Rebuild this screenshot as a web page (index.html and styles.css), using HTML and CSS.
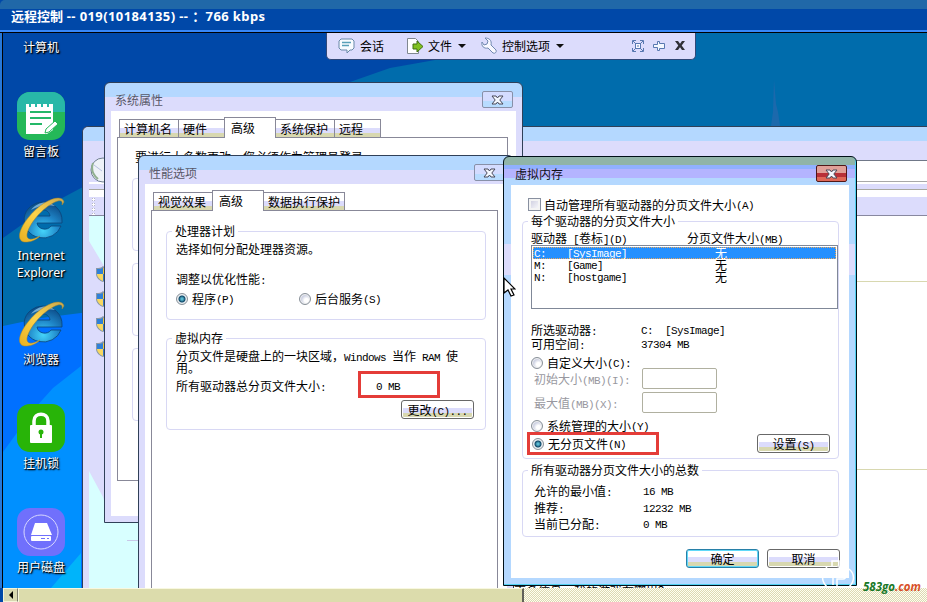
FILE: index.html
```html
<!DOCTYPE html>
<html lang="zh-CN">
<head>
    <meta charset="UTF-8">
    <title>远程控制</title>
    <link rel="stylesheet" href="styles.css">
</head>
<body>
    <svg class="defs" width="0" height="0">
        <defs>
            <radialGradient id="ball" cx="50%" cy="80%" r="80%">
                <stop offset="0" stop-color="#45d4fa"/>
                <stop offset="0.5" stop-color="#1f86c8"/>
                <stop offset="1" stop-color="#0b4a86"/>
            </radialGradient>
            <linearGradient id="ring" x1="0" y1="1" x2="1" y2="0">
                <stop offset="0" stop-color="#e8b020"/>
                <stop offset="0.5" stop-color="#ffd34a"/>
                <stop offset="1" stop-color="#c8a850"/>
            </linearGradient>
            <symbol id="ie" viewBox="0 0 48 48">
                <path d="M26 6a19 18 0 0 1 19 19v2H20c1 7 11 8 14 3h10A19 18 0 1 1 26 6zM20 20h13c-1-8-12-8-13 0z" fill="url(#ball)" fill-rule="evenodd" stroke="#0a4478" stroke-width=".8"/>
                <path d="M14 14c6-8 17-10 24-4-8-2-17 0-24 4z" fill="#9fcfe8" opacity=".7"/>
                <path d="M47 6C45-3 25 4 11 22-1 37-1 50 15 45c3-1 6-3 8-5-7 4-14 5-13-2 2-10 15-26 28-32 5-2 8-2 7 3z" fill="url(#ring)" stroke="#a8842a" stroke-width=".5"/>
            </symbol>
            <symbol id="x" viewBox="0 0 13 10">
                <path d="M1 1h4l1.500 2L8 1h4L8.800 5 12 9H8L6.500 7 5 9H1l3.200-4z"/>
            </symbol>
            <symbol id="shield" viewBox="0 0 14 16">
                <path d="M7 0c2 2 4 2 7 2v6c0 4-4 7-7 8-3-1-7-4-7-8V2c3 0 5 0 7-2z" fill="#8898a8"/>
                <path d="M7 2v6H1V3c3 0 4 0 6-1z" fill="#3080d8"/>
                <path d="M7 2v6h6V3c-3 0-4 0-6-1z" fill="#f0c840"/>
                <path d="M1 8h6v7c-3-1-6-4-6-7z" fill="#f8d860"/>
                <path d="M13 8H7v7c3-1 6-4 6-7z" fill="#3878c8"/>
            </symbol>
        </defs>
    </svg>

    <div class="screen">
        <header class="caption">远程控制<span> -- 019(10184135) -- ：766 kbps</span></header>

        <main class="desktop">
            <svg class="wallpaper" width="924" height="555" viewBox="3 33 924 555">
                <rect x="3" y="33" width="924" height="555" fill="#0048a8"/>
                <path d="M452 33l-17 27-45 8-40 14-110 38L81 188l-30 16-48 34v350h924V33z" fill="#006cac"/>
                <path d="M81 313l-40 5-38 8v262h200V313z" fill="#0070ff"/>
                <path d="M81 366l-28 22-18 20-32 44v136h78z" fill="#0090ff"/>
                <path d="M81 553l-12 14-18 21h30z" fill="#00b4fa"/>
                <path d="M771 126l2-14 1-32 2 24 2 8 2 14z" fill="#2868ac" opacity=".7"/>
            </svg>

            <ul class="shortcuts">
                <li><i></i><b>计算机</b></li>
                <li>
                    <svg width="48" height="48" viewBox="0 0 48 48">
                        <rect width="48" height="48" rx="13" fill="#24b858"/>
                        <path d="M0 20v-7A13 13 0 0 1 13 0h22a13 13 0 0 1 13 13v7z" fill="#28b8a8"/>
                        <path d="M9 12h3v3h2v-3h4v3h2v-3h4v3h2v-3h4v3h2v-3h4v26l-6 4H9z" fill="#fff"/>
                        <path d="M13 20h21M13 26h21M13 32h12" stroke="#24b868" stroke-width="2"/>
                        <path d="M28 41l1-4 9-8 3 3-9 8z" fill="#fff" stroke="#24b858" stroke-width="1"/>
                    </svg>
                    <b>留言板</b>
                </li>
                <li><svg width="48" height="48"><use href="#ie"/></svg><b class="latin">Internet<br>Explorer</b></li>
                <li><svg width="48" height="48"><use href="#ie"/></svg><b>浏览器</b></li>
                <li>
                    <svg width="48" height="48" viewBox="0 0 48 48">
                        <rect width="48" height="48" rx="13" fill="#28b408"/>
                        <path d="M17 24v-7c0-9 14-9 14 0v7" fill="none" stroke="#fff" stroke-width="3.500"/>
                        <rect x="13" y="21" width="22" height="18" rx="1" fill="#fff"/>
                        <circle cx="24" cy="28" r="2.500" fill="#28b408"/>
                        <path d="M23 28h2v6h-2z" fill="#28b408"/>
                    </svg>
                    <b>挂机锁</b>
                </li>
                <li>
                    <svg width="48" height="48" viewBox="0 0 48 48">
                        <rect width="48" height="48" rx="13" fill="#7070fc"/>
                        <circle cx="24" cy="24" r="17" fill="none" stroke="#d8d8ff"/>
                        <path d="M18 15h12l5 12H14z" fill="#fff"/>
                        <rect x="14" y="28" width="20" height="5" rx="1" fill="#fff"/>
                        <path d="M24 30.500h4M30 30.500h2" stroke="#7070fc"/>
                    </svg>
                    <b>用户磁盘</b>
                </li>
            </ul>

            <section class="window explorer">
                <div class="strip"></div>
                <div class="address"></div>
                <div class="menubar"></div>
                <div class="toolbar"></div>
                <div class="pages">
                    <div class="sidebar">
                        <svg class="wedge" width="50" height="373" viewBox="89 215 50 373">
                            <path d="M89 215h15v50L89 240zM89 470l14 26 8 26h28v66H89z" fill="#d8ffff"/>
                            <path d="M127 539.500h12" stroke="#c8c8e8"/>
                        </svg>
                        <svg class="nav" width="26" height="26"><circle cx="13" cy="13" r="12" fill="#eef2f8" stroke="#708090"/><path d="M3 6c-2 6 0 12 5 16" stroke="#90b090" stroke-width="2" fill="none"/><path d="M4 8l8 6" stroke="#b8c0e0"/></svg>
                        <svg class="shields" width="14" height="94">
                            <use href="#shield" width="14" height="16"/>
                            <use href="#shield" y="25" width="14" height="16"/>
                            <use href="#shield" y="50" width="14" height="16"/>
                            <use href="#shield" y="75" width="14" height="16"/>
                        </svg>
                    </div>
                    <div class="page"><p class="cut">更多信息：我的游戏在哪里？</p></div>
                </div>
            </section>

            <section class="window sysprops">
                <header><h2>系统属性</h2><button class="close"><svg width="13" height="10"><use href="#x"/></svg></button></header>
                <div class="content">
                    <nav class="tabs"><a class="w4">计算机名</a><a class="w2">硬件</a><a class="active">高级</a><a class="w4">系统保护</a><a class="w2">远程</a></nav>
                    <div class="pane">
                        <p>要进行大多数更改，您必须作为管理员登录。</p>
                        <div class="box"></div><div class="box"></div><div class="box"></div>
                    </div>
                </div>
            </section>

            <section class="window perf">
                <header><h2>性能选项</h2><button class="close"><svg width="13" height="10"><use href="#x"/></svg></button></header>
                <div class="content">
                    <nav class="tabs"><a class="w4">视觉效果</a><a class="active">高级</a><a class="w6">数据执行保护</a></nav>
                    <div class="pane">
                        <fieldset class="cpu">
                            <legend>处理器计划</legend>
                            <p>选择如何分配处理器资源。</p>
                            <p class="adjust">调整以优化性能<s>:</s></p>
                            <div class="row choices">
                                <label><i class="radio on"></i>程序<s>(P)</s></label>
                                <label><i class="radio"></i>后台服务<s>(S)</s></label>
                            </div>
                        </fieldset>
                        <fieldset class="vmem">
                            <legend>虚拟内存</legend>
                            <p>分页文件是硬盘上的一块区域，<s>Windows </s>当作<s> RAM </s>使<br>用。</p>
                            <div class="row total">
                                <span>所有驱动器总分页文件大小<s>:</s></span>
                                <span class="mark"><s>0 MB</s></span>
                            </div>
                            <button class="btn">更改<s>(C)...</s></button>
                        </fieldset>
                    </div>
                </div>
            </section>

            <section class="window memory">
                <header><h2>虚拟内存</h2><button class="close"><svg width="13" height="10"><use href="#x"/></svg></button></header>
                <div class="content">
                    <label class="row auto"><i class="check"></i>自动管理所有驱动器的分页文件大小<s>(A)</s></label>
                    <fieldset class="drives">
                        <legend>每个驱动器的分页文件大小</legend>
                        <div class="row heads"><span>驱动器<s> [</s>卷标<s>](D)</s></span><span>分页文件大小<s>(MB)</s></span></div>
                        <ul class="list">
                            <li class="selected"><s>C:</s><s>[SysImage]</s><span>无</span></li>
                            <li><s>M:</s><s>[Game]</s><span>无</span></li>
                            <li><s>N:</s><s>[hostgame]</s><span>无</span></li>
                        </ul>
                        <div class="row pair first"><span>所选驱动器<s>:</s></span><s>C:  [SysImage]</s></div>
                        <div class="row pair second"><span>可用空间<s>:</s></span><s>37304 MB</s></div>
                        <label class="row custom"><i class="radio"></i>自定义大小<s>(C):</s></label>
                        <div class="row size initial"><span>初始大小<s>(MB)(I):</s></span><input type="text" disabled></div>
                        <div class="row size"><span>最大值<s>(MB)(X):</s></span><input type="text" disabled></div>
                        <label class="row managed"><i class="radio"></i>系统管理的大小<s>(Y)</s></label>
                        <div class="row last">
                            <label class="mark"><i class="radio on"></i>无分页文件<s>(N)</s></label>
                            <button class="btn">设置<s>(S)</s></button>
                        </div>
                    </fieldset>
                    <fieldset class="totals">
                        <legend>所有驱动器分页文件大小的总数</legend>
                        <div class="row pair"><span>允许的最小值<s>:</s></span><s>16 MB</s></div>
                        <div class="row pair"><span>推荐<s>:</s></span><s>12232 MB</s></div>
                        <div class="row pair"><span>当前已分配<s>:</s></span><s>0 MB</s></div>
                    </fieldset>
                    <div class="actions"><button class="btn default">确定</button><button class="btn">取消</button></div>
                </div>
            </section>

            <div class="remote-bar">
                <span class="item talk">
                    <svg width="18" height="18" viewBox="0 0 18 18"><path d="M3 2h11l2 2v7l-2 2h-2l-3 3v-3H3l-2-2V4z" fill="#f8fcff" stroke="#6888a8"/><path d="M4 5.500h9M4 8.500h7" stroke="#58a0b8" stroke-width="1.300"/></svg>会话
                </span>
                <span class="item file">
                    <svg width="18" height="18" viewBox="0 0 18 18"><path d="M1.500 1.500h8l3 3v12h-11z" fill="#fff" stroke="#808890"/><path d="M7 7h4V4l6 5.500-6 5.500v-3H7z" fill="#80c020" stroke="#407010"/></svg>文件<i></i>
                </span>
                <span class="item options">
                    <svg width="17" height="17" viewBox="0 0 17 17"><path d="M4 1l3 3-1 3-3 1-2-3c-1 4 2 7 6 6l5 5c2 1 4-1 3-3l-5-5c1-5-2-7-6-7z" fill="#f8f8ff" stroke="#7088b0"/></svg>控制选项<i></i>
                </span>
                <span class="tools">
                    <svg width="12" height="12" viewBox="0 0 12 12" fill="none" stroke="#5878b0"><path d="M.5 4V.5H4M8 .5h3.500V4M11.500 8v3.500H8M4 11.500H.5V8M1 1l2.500 2.500M11 1L8.500 3.500M11 11L8.500 8.500M1 11l2.500-2.500"/><rect x="3.500" y="3.500" width="5" height="5" fill="#f8f8ff"/><path d="M5 6h2"/></svg>
                    <svg width="13" height="12" viewBox="0 0 13 12"><path d="M.5 4.500h4v-3h2v2h5v5h-5v2h-2v-3h-4z" fill="#f4f8ff" stroke="#5878b0"/></svg>
                    <svg width="10" height="9" viewBox="0 0 10 10" preserveAspectRatio="none"><path d="M0 0h3l2 3 2-3h3L6.700 5 10 10H7L5 7l-2 3H0l3.300-5z" fill="#303038"/></svg>
                </span>
            </div>

            <svg class="cursor" width="13" height="21" viewBox="0 0 13 21"><path d="M1 1v15l4-3 3 6 3-1-3-6h4z" fill="#fff" stroke="#000" stroke-width="1.200"/></svg>
        </main>

        <footer class="scrollbar"><span class="arrow"></span><span class="thumb"></span><span class="track"></span></footer>

        <svg class="logo" width="36" height="34" viewBox="0 0 36 34" fill="none" stroke="#fff" stroke-width="1.500"><path d="M6 8c-6 6-6 14 0 20M28 10c6 5 6 12 0 18M12 12v14M12 28h10M11 8V2h7v6M14 12h8c4 0 4 8 0 8h-6v7"/></svg>
        <div class="site">583go<em>.com</em></div>
    </div>
</body>
</html>
```
FILE: styles.css
```css
* {
    box-sizing: border-box;
}

body {
    margin: 0;
    font-family: "Noto Sans CJK SC", sans-serif;
    font-size: 12px;
    line-height: 12px;
    color: #000;
}

p, h2, ul, fieldset {
    margin: 0;
    padding: 0;
}

ul {
    list-style: none;
}

/* half-width text */
s {
    font-family: "Liberation Mono", monospace;
    font-size: 11px;
    letter-spacing: -0.6px;
    line-height: 0;
    text-decoration: none;
    white-space: pre;
}

.defs {
    position: absolute;
}

.screen {
    position: relative;
    display: flex;
    flex-direction: column;
    width: 927px;
    height: 602px;
    overflow: hidden;
    background: #0048a8;
}

.caption {
    height: 33px;
    padding: 1px 0 0 11px;
    font-size: 13px;
    font-weight: bold;
    line-height: 30px;
    color: #fff;
    white-space: pre;
    border-radius: 5px 0 0 0;
    background: linear-gradient(#2068a8 0 9px, #0048a8 9px 30px, #3888f8 30px 32px, #000 32px);
}

.caption span {
    font-family: "Noto Sans", "Noto Sans CJK SC", sans-serif;
    letter-spacing: 0.4px;
}

.desktop {
    position: relative;
    height: 555px;
    margin-left: 3px;
    overflow: hidden;
    box-shadow: -1px 0 #000, -3px 0 #2878d8;
}

.wallpaper {
    position: absolute;
    left: 0;
    top: 0;
}

.shortcuts {
    position: relative;
    width: 76px;
    margin-top: -45px;
}

.shortcuts li {
    display: flex;
    flex-direction: column;
    align-items: center;
    height: 104px;
}

.shortcuts i {
    height: 48px;
}

.shortcuts b {
    margin-top: 5px;
    font-weight: normal;
    color: #fff;
    text-align: center;
    white-space: nowrap;
    text-shadow: 1px 1px 1px #000, 1px 1px 2px #000;
}

.shortcuts .latin {
    margin-top: 3px;
    font-family: "Noto Sans", sans-serif;
    font-size: 12.3px;
    line-height: 17px;
}

/* windows */
.window {
    position: absolute;
    border: 1px solid #304058;
    border-radius: 6px 6px 0 0;
    background: linear-gradient(#b4d8ff 14px, #dcdcfc 14px);
}

.window header {
    display: flex;
    justify-content: space-between;
    height: 28px;
}

.window h2 {
    padding: 11px 0 0 10px;
    font-size: 12px;
    font-weight: normal;
    color: #585868;
}

.close {
    display: flex;
    align-items: center;
    justify-content: center;
    width: 31px;
    height: 17px;
    margin: 8px 9px 0 0;
    padding: 0;
    border: 1px solid #8890a8;
    border-radius: 2px;
    background: linear-gradient(#d4dcff 60%, #b8dcff 60%);
}

.close svg {
    fill: #f4f8ff;
    stroke: #484858;
}

.content {
    margin: 0 6px;
    background: #fff;
}

.tabs {
    display: flex;
    align-items: flex-end;
    height: 21px;
    padding-left: 2px;
}

.tabs a {
    height: 18px;
    padding: 3px 0 0 5px;
    border: 1px solid #888898;
    border-bottom: 0;
    margin-right: -1px;
    background: linear-gradient(#fff 8px, #dcdcfc 8px 13px, #d8d8b0 13px);
    white-space: nowrap;
}

.tabs .w2 {
    width: 47px;
    padding-left: 4px;
}

.tabs .w4 {
    width: 60px;
    padding-left: 4px;
}

.tabs .w6 {
    width: 82px;
    padding-left: 4px;
}

.tabs .active {
    position: relative;
    z-index: 1;
    height: 21px;
    width: 52px;
    margin-bottom: -1px;
    padding: 4px 0 0 6px;
    background: #fff;
}

.pane {
    border: 1px solid #888898;
}

fieldset {
    min-width: 0;
    border: 1px solid #d8d8f4;
    border-radius: 4px;
}

legend {
    height: 12px;
    margin-left: 5px;
    padding: 0 3px;
}

.row, .row label {
    display: flex;
    align-items: center;
    white-space: nowrap;
}

.row > s, label > s {
    padding-top: 2px;
}

.radio {
    flex: none;
    width: 12px;
    height: 12px;
    margin-right: 4px;
    border: 1px solid #889098;
    border-radius: 50%;
    background: radial-gradient(circle at 65% 65%, #fff 2px, #d0d4e4 5px);
    box-shadow: inset 0 0 0 1px #f0f0f0;
}

.radio.on {
    background: radial-gradient(circle, #58b8d0 0 1px, #104868 3px, #d8e4ec 4px);
}

.check {
    width: 13px;
    height: 13px;
    margin-right: 3px;
    border: 1px solid #8890a0;
    background: linear-gradient(135deg, #c8c8dc, #fff);
    box-shadow: inset 0 0 0 2px #f4f4f4;
}

.btn {
    width: 73px;
    height: 19px;
    padding: 0;
    border: 1px solid #686868;
    border-radius: 3px;
    font: 12px/12px "Noto Sans CJK SC", sans-serif;
    color: #000;
    background: linear-gradient(#fff 7px, #dcdcfc 7px 12px, #d8d8b0 12px);
    box-shadow: inset 0 0 0 1px #fff;
}

.btn.default {
    border-color: #2880a8;
    box-shadow: inset 0 0 0 1px #60d8f8;
}

.mark {
    border: 3px solid #e43c38;
}

/* explorer behind the dialogs */
.explorer {
    left: 79px;
    top: 93px;
    width: 860px;
    height: 480px;
    background: #dcdcfc;
}

.explorer .strip {
    height: 33px;
    border-radius: 6px 6px 0 0;
    background: linear-gradient(#b4d8ff 14px, #dcdcfc 14px);
}

.explorer .address {
    height: 22px;
    margin-left: 440px;
    border: 1px solid #707888;
    border-bottom-color: #a8a8a8;
    background: #fff;
}

.explorer .menubar {
    height: 15px;
    margin-left: 6px;
    background: linear-gradient(#fff 2px, #dcdcfc 2px 7px, #a8a8a0 7px 8px, #fff 8px);
}

.explorer .toolbar {
    height: 19px;
    margin-left: 6px;
    border-bottom: 1px solid #8888a0;
    background: radial-gradient(circle, #fff 1.2px, #b8b8c8 1.3px 1.8px, transparent 2px) 2px 0 / 5px 5px repeat-y, #dcdcfc;
}

.pages {
    display: flex;
    height: 373px;
    margin-left: 6px;
}

.sidebar {
    position: relative;
    width: 300px;
}

.nav {
    position: absolute;
    left: 1px;
    top: -59px;
}

.shields {
    position: absolute;
    left: 7px;
    top: 50px;
}

.page {
    display: flex;
    flex: 1;
    align-items: flex-end;
    background: linear-gradient(#fff 65px, #d8d8b0 65px 66px, #fff 66px 253px, #d8d8b0 253px 254px, #fff 254px);
}

.cut {
    height: 4px;
    margin-left: 125px;
    overflow: hidden;
}

.sysprops {
    left: 101px;
    top: 49px;
    width: 419px;
    height: 441px;
}

.sysprops .content {
    height: 405px;
    padding: 5px 8px 0 6px;
}

.sysprops .pane {
    height: 344px;
    padding: 13px 14px;
}

.sysprops .pane p {
    margin: 0 0 15px 3px;
}

.sysprops .box {
    height: 73px;
    margin-bottom: 12px;
    border: 1px solid #d8d8f4;
    border-radius: 4px;
}

.perf {
    left: 135px;
    top: 122px;
    width: 376px;
    height: 450px;
}

.perf .close {
    margin-right: 8px;
}

.perf .content {
    height: 415px;
    padding: 5px 9px 0 6px;
}

.perf .pane {
    height: 400px;
    padding: 14px 11px 0 14px;
}

.perf fieldset {
    height: 95px;
    padding-left: 9px;
}

.perf legend {
    margin-left: -4px;
}

.perf p {
    margin-top: 6px;
    white-space: nowrap;
}

.perf .adjust {
    margin-top: 18px;
}

.choices {
    margin-top: 8px;
    height: 12px;
}

.choices label {
    width: 123px;
}

.perf .vmem {
    height: 98px;
    margin-top: 12px;
}

.total {
    height: 27px;
    margin-top: -3px;
}

.total > span:first-child {
    width: 182px;
    padding-top: 3px;
}

.total .mark {
    width: 82px;
    height: 27px;
    padding: 5px 0 0 15px;
}

.vmem .btn {
    display: block;
    margin: 2px 0 0 225px;
}

.memory {
    left: 500px;
    top: 123px;
    width: 354px;
    height: 430px;
    border-color: #001018;
    box-shadow: inset -1px -1px #50d0f0;
    background: linear-gradient(#90b4a8 8px, #90b0ff 8px 12px, #b4b4ff 12px 21px, #b4d8ff 21px 87px, #dcdcfc 87px 118px, #b4d8ff 118px);
}

.memory h2 {
    padding-left: 11px;
    color: #101018;
}

.memory .close {
    margin-right: 9px;
    border-color: #501818;
    background: linear-gradient(#e0a098 7px, #b83038 7px 11px, #e06858 11px);
}

.memory .content {
    height: 393px;
    margin: 0 7px;
    padding: 13px 10px 0 11px;
}

.auto {
    height: 13px;
    margin-left: 6px;
}

.drives {
    height: 244px;
    margin-top: 4px;
    padding: 3px 0 0 8px;
}

.drives legend {
    margin-left: -3px;
}

.heads {
    height: 15px;
}

.heads span:first-child {
    width: 156px;
}

.list {
    height: 64px;
    padding: 1px;
    border: 1px solid #808898;
}

.list li {
    display: flex;
    align-items: center;
    height: 12px;
    padding-left: 1px;
}

.list s {
    padding-top: 2px;
}

.list s:first-child {
    width: 33px;
}

.list s + s {
    width: 148px;
}

.list .selected {
    color: #fff;
    background: #2490ff;
    outline: 1px dotted #e8a860;
    outline-offset: -1px;
}

.pair {
    height: 14px;
}

.pair > span {
    width: 110px;
}

.first {
    margin-top: 14px;
}

.custom {
    height: 12px;
    margin-top: 6px;
}

.size {
    height: 21px;
    margin: 3px 0 0 3px;
    color: #9898a0;
}

.size span {
    width: 108px;
    padding-top: 1px;
}

.size.initial {
    margin-top: -1px;
}

.size input {
    width: 75px;
    height: 21px;
    border: 1px solid #b0b0a0;
    border-radius: 2px;
    background: #fff;
}

.managed {
    height: 12px;
    margin-top: 7px;
}

.last {
    height: 23px;
    margin: 0 8px 0 -4px;
    justify-content: space-between;
}

.last .mark {
    position: relative;
    width: 132px;
    height: 23px;
    padding-left: 2px;
}

.totals {
    height: 73px;
    margin-top: 5px;
    padding: 7px 0 0 11px;
}

.totals legend {
    margin-left: -6px;
}

.totals .pair {
    height: 16.5px;
}

.totals .pair > span {
    width: 109px;
}

.actions {
    display: flex;
    justify-content: flex-end;
    gap: 8px;
    margin: 12px -1px 0 0;
}

/* floating bar of the remote session */
.remote-bar {
    position: absolute;
    left: 323px;
    top: -1px;
    display: flex;
    align-items: center;
    width: 370px;
    height: 28px;
    padding: 0 10px 0 11px;
    border: 1px solid #304878;
    border-top: 0;
    border-radius: 0 0 5px 5px;
    background: #dcdcfc;
}

.item {
    display: flex;
    align-items: center;
    white-space: nowrap;
}

.item svg {
    margin-right: 4px;
}

.talk {
    width: 68px;
}

.file {
    width: 75px;
}

.item i {
    margin-left: 6px;
    border: 4px solid transparent;
    border-top-color: #101010;
    border-bottom: 0;
}

.tools {
    display: flex;
    align-items: center;
    gap: 9px;
    margin-left: auto;
}

.cursor {
    position: absolute;
    left: 500px;
    top: 244px;
}

.scrollbar {
    display: flex;
    height: 14px;
    padding-left: 3px;
}

.arrow {
    display: flex;
    align-items: center;
    justify-content: center;
    width: 15px;
    border: 1px solid #f4f4d8;
    border-right-color: #808070;
    background: #d8d8b0;
}

.arrow::before {
    content: "";
    border: 4px solid transparent;
    border-right-color: #000;
    border-left: 0;
}

.thumb {
    width: 506px;
    border: 1px solid #f8f8e0;
    border-right: 2px solid #606058;
    border-bottom: 0;
    background: #dcdcac;
}

.track {
    flex: 1;
    background: repeating-conic-gradient(#dcd8b4 0 25%, #fffff0 0 50%) 0 0 / 2px 2px;
}

.logo {
    position: absolute;
    left: 821px;
    top: 559px;
}

.site {
    position: absolute;
    left: 863px;
    top: 580px;
    font: italic bold 11.5px/14px "Open Sans", sans-serif;
    color: #187828;
}

.site em {
    color: #d85028;
}
```
